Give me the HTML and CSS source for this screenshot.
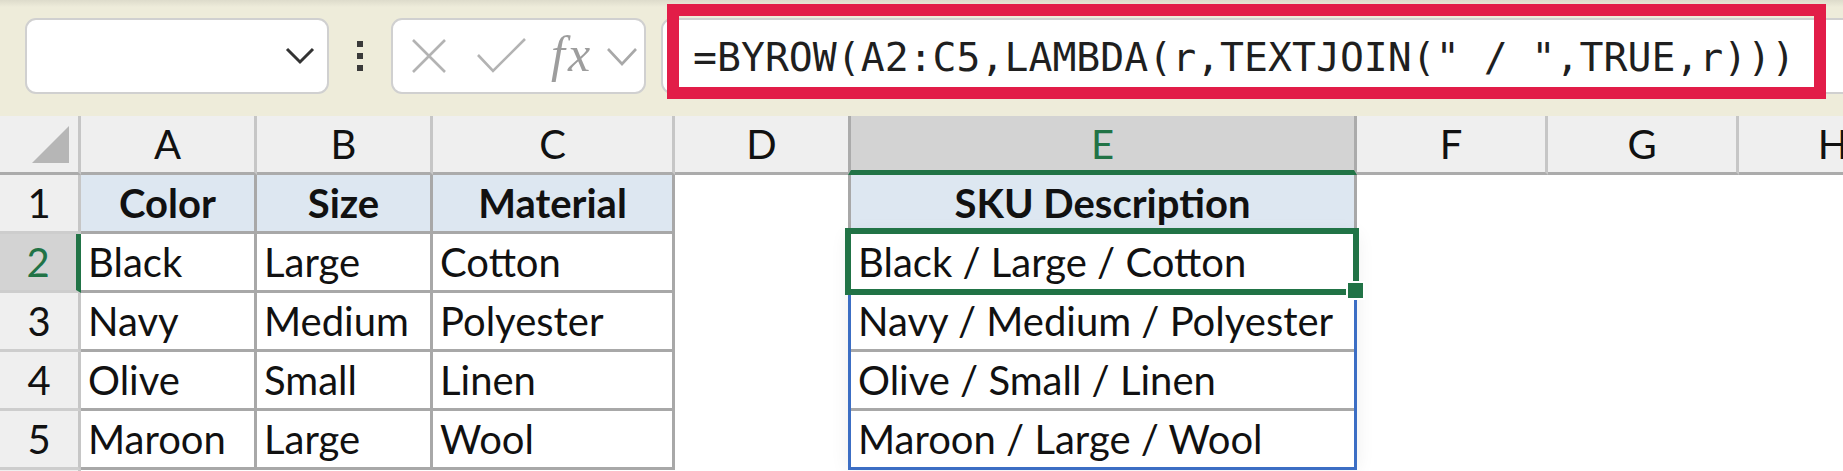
FILE: index.html
```html
<!DOCTYPE html>
<html lang="en">
<head>
    <meta charset="UTF-8">
    <title>BYROW TEXTJOIN</title>
    <link rel="stylesheet" href="styles.css">
</head>
<body>
    <div class="toolbar">
        <div class="namebox">
            <svg width="30" height="18" viewBox="0 0 30 18"><polyline points="2,2 15,15 28,2" fill="none" stroke="#333" stroke-width="3"/></svg>
        </div>
        <div class="grip"><span></span><span></span><span></span></div>
        <div class="fxbox">
            <svg class="ic-x" width="36" height="36" viewBox="0 0 36 36"><path d="M2 2L34 34M34 2L2 34" stroke="#b3b3b3" stroke-width="2.6" fill="none"/></svg>
            <svg class="ic-ok" width="50" height="36" viewBox="0 0 50 36"><polyline points="1,17 16,33 48,1" fill="none" stroke="#b3b3b3" stroke-width="2.6"/></svg>
            <span class="fx">fx</span>
            <svg class="ic-down" width="30" height="18" viewBox="0 0 30 18"><polyline points="1,1 15,16 29,1" fill="none" stroke="#a8a8a8" stroke-width="2.6"/></svg>
        </div>
        <div class="formula">
            <span class="formula-text">=BYROW(A2:C5,LAMBDA(r,TEXTJOIN(" / ",TRUE,r)))</span>
            <div class="highlight"></div>
        </div>
    </div>

    <div class="sheet">
        <!-- column headers -->
        <div class="corner"><div class="tri"></div></div>
        <div class="ch">A</div>
        <div class="ch">B</div>
        <div class="ch">C</div>
        <div class="ch no-right">D</div>
        <div class="ch sel">E</div>
        <div class="ch">F</div>
        <div class="ch">G</div>
        <div class="ch">H</div>

        <!-- row 1 -->
        <div class="rh">1</div>
        <div class="c hd">Color</div>
        <div class="c hd">Size</div>
        <div class="c hd">Material</div>
        <div class="blank"></div>
        <div class="c hd e-left">SKU Description</div>
        <div class="blank"></div>
        <div class="blank"></div>
        <div class="blank"></div>

        <!-- row 2 -->
        <div class="rh active">2</div>
        <div class="c">Black</div>
        <div class="c">Large</div>
        <div class="c">Cotton</div>
        <div class="blank"></div>
        <div class="spill">
            <div class="sp">Black / Large / Cotton</div>
            <div class="sp">Navy / Medium / Polyester</div>
            <div class="sp">Olive / Small / Linen</div>
            <div class="sp last">Maroon / Large / Wool</div>
            <div class="active-cell"></div>
            <div class="handle"></div>
        </div>
        <div class="blank"></div>
        <div class="blank"></div>
        <div class="blank"></div>

        <!-- row 3 -->
        <div class="rh">3</div>
        <div class="c">Navy</div>
        <div class="c">Medium</div>
        <div class="c">Polyester</div>
        <div class="blank"></div>
        <div class="blank"></div>
        <div class="blank"></div>
        <div class="blank"></div>

        <!-- row 4 -->
        <div class="rh">4</div>
        <div class="c">Olive</div>
        <div class="c">Small</div>
        <div class="c">Linen</div>
        <div class="blank"></div>
        <div class="blank"></div>
        <div class="blank"></div>
        <div class="blank"></div>

        <!-- row 5 -->
        <div class="rh">5</div>
        <div class="c">Maroon</div>
        <div class="c">Large</div>
        <div class="c">Wool</div>
        <div class="blank"></div>
        <div class="blank"></div>
        <div class="blank"></div>
        <div class="blank"></div>

        <!-- row 6, only its top edge is in view -->
        <div class="rh"></div>
    </div>
</body>
</html>
```

FILE: styles.css
```css
html, body {
    margin: 0;
    padding: 0;
}
body {
    width: 1843px;
    height: 471px;
    overflow: hidden;
    background: #fff;
    font-family: Lato, "Liberation Sans", sans-serif;
    color: #111;
}

/* formula bar */
.toolbar {
    height: 116px;
    box-sizing: border-box;
    padding: 18px 0 0 25px;
    display: flex;
    align-items: flex-start;
    background: linear-gradient(to bottom, #dddbcb 0, #eeecda 7px, #eeecda 100%);
}
.namebox, .fxbox, .formula {
    height: 76px;
    box-sizing: border-box;
    background: #fff;
    border: 2px solid #d0d0d0;
    border-radius: 11px;
    display: flex;
    align-items: center;
}
.namebox {
    width: 304px;
    justify-content: flex-end;
    padding-right: 12px;
}
.grip {
    width: 6px;
    height: 76px;
    margin: 0 28px;
    display: flex;
    flex-direction: column;
    justify-content: center;
    gap: 6px;
}
.grip span {
    width: 6px;
    height: 6px;
    background: #3a3a3a;
}
.fxbox {
    width: 255px;
    padding-left: 18px;
}
.ic-x { margin-right: 30px; }
.ic-ok { margin-right: 24px; }
.fx {
    font-family: "Liberation Serif", serif;
    font-style: italic;
    font-size: 50px;
    color: #9d9d9d;
    letter-spacing: 3px;
    line-height: 1;
    margin-top: -4px;
    margin-right: 14px;
}
.ic-down { margin-top: 2px; }
.formula {
    flex: 1;
    margin-left: 15px;
    margin-right: -30px;
    position: relative;
    padding: 2px 0 0 30px;
}
.formula-text {
    font-family: "DejaVu Sans Mono", "Liberation Mono", monospace;
    font-size: 39.8px;
    color: #1f1f1f;
    white-space: pre;
}
.highlight {
    position: absolute;
    left: 4px;
    top: -16px;
    width: 1159px;
    height: 95px;
    box-sizing: border-box;
    border: 12px solid #e21d48;
}

/* grid */
.sheet {
    display: grid;
    grid-template-columns: 81px 176px 176px 242px 173px 509px 191px 191px 191px;
    grid-auto-rows: 59px;
    font-size: 40px;
}
.sheet > div {
    box-sizing: border-box;
    line-height: 56px;
    white-space: nowrap;
    overflow: hidden;
}
.corner {
    background: #efefef;
    border-right: 3px solid #c6c6c6;
    border-bottom: 3px solid #ababab;
    display: flex;
    justify-content: flex-end;
    align-items: flex-end;
    padding: 0 9px 9px 0;
}
.tri {
    width: 37px;
    height: 37px;
    background: #b6b6b6;
    clip-path: polygon(100% 0, 100% 100%, 0 100%);
}
.ch {
    background: #efefef;
    text-align: center;
    border-right: 3px solid #c6c6c6;
    border-bottom: 3px solid #ababab;
}
.ch.no-right { border-right: none; }
.ch.sel {
    background: #d3d3d3;
    color: #217346;
    border-left: 3px solid #ababab;
    border-right-color: #ababab;
    border-bottom: 5px solid #217346;
}
.rh {
    background: #efefef;
    text-align: center;
    border-right: 3px solid #c6c6c6;
    border-bottom: 3px solid #cdcdcd;
}
.rh.active {
    background: #d3d3d3;
    color: #217346;
    border-right: 5px solid #217346;
}
.c {
    padding-left: 7px;
    border-right: 3px solid #a8a8a8;
    border-bottom: 3px solid #a8a8a8;
}
.c.hd {
    background: #dde7f1;
    font-weight: 700;
    text-align: center;
    padding-left: 0;
}
.c.e-left { border-left: 3px solid #a8a8a8; }

/* spilled range E2:E5 */
.sheet > .spill {
    grid-row: 3 / 7;
    grid-column: 6;
    position: relative;
    overflow: visible;
    border: 3px solid #3c6ec4;
    border-top: none;
    box-shadow: 0 0 18px rgba(0, 0, 0, 0.07);
    background: #fff;
}
.sp {
    height: 59px;
    box-sizing: border-box;
    padding-left: 7px;
    border-bottom: 3px solid #a8a8a8;
}
.sp.last {
    height: 56px;
    border-bottom: none;
}
.active-cell {
    position: absolute;
    left: -6px;
    top: -6px;
    width: 514px;
    height: 67px;
    box-sizing: border-box;
    border: 6px solid #217346;
}
.handle {
    position: absolute;
    left: 495px;
    top: 47px;
    width: 19px;
    height: 19px;
    box-sizing: border-box;
    background: #217346;
    border: 2px solid #fff;
}
```
